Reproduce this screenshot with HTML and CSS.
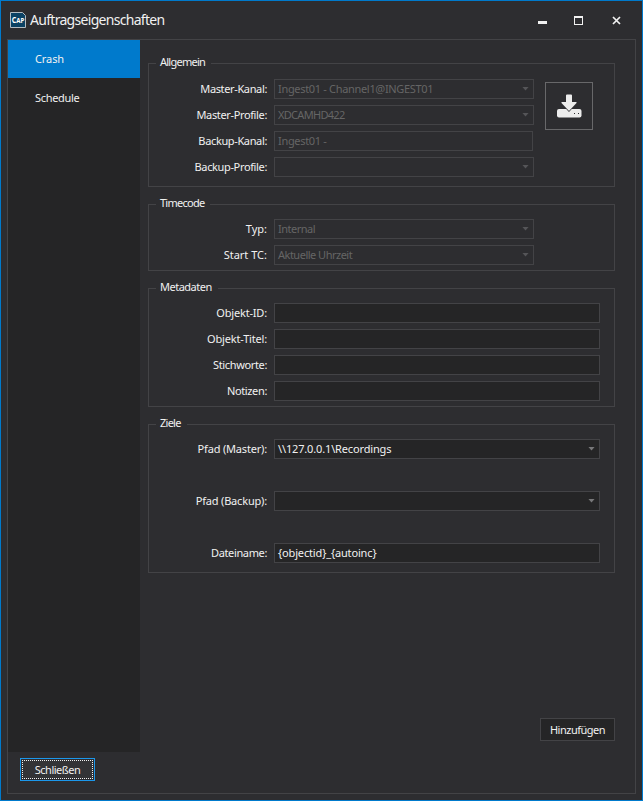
FILE: index.html
```html
<!DOCTYPE html>
<html lang="de">
<head>
<meta charset="utf-8">
<title>Auftragseigenschaften</title>
<link rel="stylesheet" href="styles.css">
</head>
<body>
<div class="window">
  <header class="titlebar">
    <svg class="logo" width="16" height="16" viewBox="0 0 16 16"><path d="M.5.5h12l3 3v12H.5z" fill="#0b4264" stroke="#b4bcc2"/><text x="8" y="11" text-anchor="middle" textLength="12.500" lengthAdjust="spacingAndGlyphs" class="logo-text">C<tspan font-size="7">AP</tspan></text></svg>
    <h1>Auftragseigenschaften</h1>
    <svg class="controls" width="84" height="12" viewBox="0 0 84 12"><path d="M0 7h9v3H0z" fill="#f1f1f1"/><path d="M36 2h9v9h-9zM37 4v6h7V4z" fill="#f1f1f1" fill-rule="evenodd"/><path d="M75 3l7 7M82 3l-7 7" stroke="#f1f1f1" stroke-width="1.7"/></svg>
  </header>
  <main class="panel">
    <nav class="sidebar">
      <a class="tab active">Crash</a>
      <a class="tab">Schedule</a>
    </nav>
    <div class="content">
      <section class="group general">
        <h2>Allgemein</h2>
        <div class="rows disabled">
          <div class="row"><label>Master-Kanal:</label><div class="field select">Ingest01 - Channel1@INGEST01</div></div>
          <div class="row"><label>Master-Profile:</label><div class="field select tight">XDCAMHD422</div></div>
          <div class="row"><label>Backup-Kanal:</label><div class="field short">Ingest01 -</div></div>
          <div class="row"><label>Backup-Profile:</label><div class="field select"></div></div>
        </div>
        <button class="download" aria-label="Download"><svg width="26" height="26" viewBox="0 0 26 26"><rect x="1" y="16" width="24.500" height="8.500" rx="2" fill="#ececec"/><path d="M10 2.500q0-1 1-1h4q1 0 1 1V9h4.500v1L13 18 5.500 10V9H10z" fill="#ececec" stroke="#2d2d30" stroke-width="1.200" paint-order="stroke"/><path d="M18 20h1v1h-1zM22 20h1v1h-1z" fill="#2d2d30"/></svg></button>
      </section>
      <section class="group timecode">
        <h2>Timecode</h2>
        <div class="rows disabled">
          <div class="row"><label class="loose">Typ:</label><div class="field select normal">Internal</div></div>
          <div class="row"><label class="loose">Start TC:</label><div class="field select normal">Aktuelle Uhrzeit</div></div>
        </div>
      </section>
      <section class="group metadata">
        <h2 class="normal">Metadaten</h2>
        <div class="rows">
          <div class="row"><label class="wide">Objekt-ID:</label><div class="field"></div></div>
          <div class="row"><label class="wide">Objekt-Titel:</label><div class="field"></div></div>
          <div class="row"><label>Stichworte:</label><div class="field"></div></div>
          <div class="row"><label>Notizen:</label><div class="field"></div></div>
        </div>
      </section>
      <section class="group targets">
        <h2>Ziele</h2>
        <div class="rows">
          <div class="row"><label class="wide">Pfad (Master):</label><div class="field select">\\127.0.0.1\Recordings</div></div>
          <div class="row"><label class="wide">Pfad (Backup):</label><div class="field select"></div></div>
          <div class="row"><label>Dateiname:</label><div class="field">{objectid}_{autoinc}</div></div>
        </div>
      </section>
      <button class="btn add">Hinzufügen</button>
    </div>
    <footer><button class="btn close"><span>Schließen</span></button></footer>
  </main>
</div>
</body>
</html>
```
FILE: styles.css
```css
* { box-sizing: border-box; }
body { margin: 0; background: #2d2d30; color: #f1f1f1; font: 11px/14px "Noto Sans", sans-serif; }
.window { height: 801px; border: 1px solid #007acc; padding: 0 6px 6px; display: flex; flex-direction: column; }
.titlebar { height: 38px; flex: none; display: flex; align-items: center; padding: 0 14px 0 3px; }
.logo { flex: none; }
.logo-text { font: bold 8px "Noto Sans", sans-serif; fill: #fff; }
h1 { margin: 0 auto 0 4px; font-size: 14px; line-height: 20px; font-weight: 400; letter-spacing: -.7px; }
.panel { flex: 1; border: 1px solid #434346; display: grid; grid-template: 712px 1fr / 132px 1fr; }
.sidebar { background: #252526; letter-spacing: -.3px; }
.tab { display: flex; align-items: center; height: 39px; padding-left: 27px; }
.active { height: 38px; background: #007acc; letter-spacing: -.1px; }
.content { padding: 23px 20px 0 8px; display: flex; flex-direction: column; }
.group { flex: none; border: 1px solid #434346; position: relative; display: flex; align-items: flex-start; padding-top: 15px; margin-bottom: 17px; }
.general { height: 124px; }
.timecode { height: 67px; padding-top: 14px; }
.metadata { height: 119px; padding-top: 14px; }
.targets { height: 149px; padding-top: 14px; }
h2 { position: absolute; top: -9px; left: 7px; margin: 0; padding: 0 6px 0 4px; background: #2d2d30; font-size: 11px; line-height: 14px; font-weight: 400; letter-spacing: -.75px; }
.rows { width: 451px; display: grid; gap: 6px; letter-spacing: -.15px; }
.targets .rows { gap: 32px; }
.row { height: 20px; display: grid; grid-template-columns: 118px 1fr; column-gap: 7px; align-items: center; white-space: nowrap; }
label { text-align: right; letter-spacing: -.36px; }
.field { height: 20px; border: 1px solid #434346; background: #252526; padding: 2px 2px 2px 3px; display: flex; align-items: center; justify-content: space-between; }
.disabled { width: 385px; letter-spacing: -.32px; }
.disabled .field { background: #2d2d30; color: #656565; }
.loose { letter-spacing: 0; }
.wide { letter-spacing: -.18px; }
.normal { letter-spacing: -.5px; }
.tight { letter-spacing: -.7px; }
.short { width: 259px; }
.select::after { content: ""; width: 7px; height: 4px; background: #78787a; clip-path: polygon(0 0, 100% 0, 50% 100%); margin: -1px 2px 0 auto; }
.disabled .select::after { background: #555558; }
.download { width: 48px; height: 48px; margin: 3px 0 0 11px; padding: 0; border: 1px solid #68686a; background: #2d2d30; display: grid; place-items: center; }
.btn { width: 75px; height: 23px; padding: 0; border: 1px solid #434346; background: #252526; color: #f1f1f1; font: inherit; letter-spacing: -.5px; }
.add { margin: 128px 0 0 auto; }
footer { grid-column: 1 / -1; padding: 6px 12px; }
.close { display: grid; border-color: #1c97ea; background: #2d2d30; padding: 1px; }
.close span { border: 1px dotted #f1f1f1; line-height: 17px; background: #333336; }
```
